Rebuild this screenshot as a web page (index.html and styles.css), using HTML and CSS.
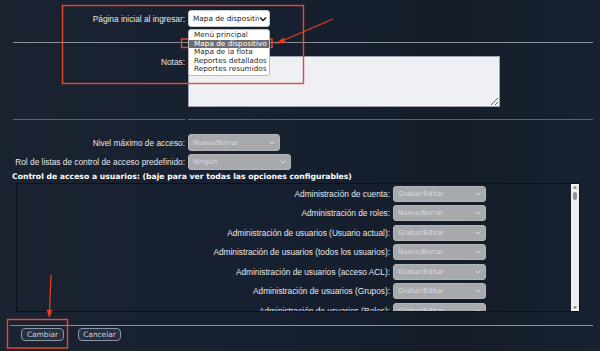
FILE: index.html
```html
<!DOCTYPE html>
<html>
<head>
	<meta name="viewport" content="width=device-width, initial-scale=1.0">
	<link rel="stylesheet" href="styles.css">
	<title>Configuración de usuario</title>
</head>
<body>
<form class="page" action="/update" method="post">
	<div class="row row-home">
		<label class="lbl">Página inicial al ingresar:</label>
		<div class="pick pick-home">
			<span class="pick-text">Mapa de dispositivo</span>
			<svg class="chev" width="8" height="6" viewBox="0 0 8 6"><path d="M1 1.5 L4 4.5 L7 1.5" fill="none" stroke="#111" stroke-width="1.4"/></svg>
			<ul class="menu">
				<li>Menú principal</li>
				<li class="hl">Mapa de dispositivo</li>
				<li>Mapa de la flota</li>
				<li>Reportes detallados</li>
				<li>Reportes resumidos</li>
			</ul>
		</div>
	</div>

	<div class="rule"></div>

	<div class="row row-notes">
		<label class="lbl">Notas:</label>
		<textarea class="notes"></textarea>
	</div>

	<div class="split-rule"><span class="cell-a"></span><span class="cell-b"></span></div>

	<div class="row row-level">
		<label class="lbl">Nivel máximo de acceso:</label>
		<div class="pick off w92"><span class="pick-text">Nuevo/Borrar</span>
			<svg class="chev" width="8" height="6" viewBox="0 0 8 6"><path d="M1.5 1.5 L4 4 L6.5 1.5" fill="none" stroke="#dcdee1" stroke-width="1"/></svg></div>
	</div>
	<div class="row row-role">
		<label class="lbl">Rol de listas de control de acceso predefinido:</label>
		<div class="pick off w103"><span class="pick-text">Ningún</span>
			<svg class="chev" width="8" height="6" viewBox="0 0 8 6"><path d="M1.5 1.5 L4 4 L6.5 1.5" fill="none" stroke="#dcdee1" stroke-width="1"/></svg></div>
	</div>

	<div class="section-title">Control de acceso a usuarios: (baje para ver todas las opciones configurables)</div>

	<div class="acl-box">
		<div class="acl-list">
			<div class="acl-row"><label class="acl-lbl">Administración de cuenta:</label><div class="pick off w93"><span class="pick-text">Grabar/Editar</span><svg class="chev" width="8" height="6" viewBox="0 0 8 6"><path d="M1.5 1.5 L4 4 L6.5 1.5" fill="none" stroke="#dcdee1" stroke-width="1"/></svg></div></div>
			<div class="acl-row"><label class="acl-lbl">Administración de roles:</label><div class="pick off w93"><span class="pick-text">Nuevo/Borrar</span><svg class="chev" width="8" height="6" viewBox="0 0 8 6"><path d="M1.5 1.5 L4 4 L6.5 1.5" fill="none" stroke="#dcdee1" stroke-width="1"/></svg></div></div>
			<div class="acl-row"><label class="acl-lbl">Administración de usuarios (Usuario actual):</label><div class="pick off w93"><span class="pick-text">Grabar/Editar</span><svg class="chev" width="8" height="6" viewBox="0 0 8 6"><path d="M1.5 1.5 L4 4 L6.5 1.5" fill="none" stroke="#dcdee1" stroke-width="1"/></svg></div></div>
			<div class="acl-row"><label class="acl-lbl">Administración de usuarios (todos los usuarios):</label><div class="pick off w93"><span class="pick-text">Nuevo/Borrar</span><svg class="chev" width="8" height="6" viewBox="0 0 8 6"><path d="M1.5 1.5 L4 4 L6.5 1.5" fill="none" stroke="#dcdee1" stroke-width="1"/></svg></div></div>
			<div class="acl-row"><label class="acl-lbl">Administración de usuarios (acceso ACL):</label><div class="pick off w93"><span class="pick-text">Grabar/Editar</span><svg class="chev" width="8" height="6" viewBox="0 0 8 6"><path d="M1.5 1.5 L4 4 L6.5 1.5" fill="none" stroke="#dcdee1" stroke-width="1"/></svg></div></div>
			<div class="acl-row"><label class="acl-lbl">Administración de usuarios (Grupos):</label><div class="pick off w93"><span class="pick-text">Grabar/Editar</span><svg class="chev" width="8" height="6" viewBox="0 0 8 6"><path d="M1.5 1.5 L4 4 L6.5 1.5" fill="none" stroke="#dcdee1" stroke-width="1"/></svg></div></div>
			<div class="acl-row"><label class="acl-lbl">Administración de usuarios (Roles):</label><div class="pick off w93"><span class="pick-text">Grabar/Editar</span><svg class="chev" width="8" height="6" viewBox="0 0 8 6"><path d="M1.5 1.5 L4 4 L6.5 1.5" fill="none" stroke="#dcdee1" stroke-width="1"/></svg></div></div>
		</div>
		<div class="scrollbar">
			<svg width="8" height="6" viewBox="0 0 8 6"><path d="M2 4.5 L4 2 L6 4.5 Z" fill="#777"/></svg>
			<div class="thumb"></div>
			<div class="track"></div>
			<svg width="8" height="6" viewBox="0 0 8 6"><path d="M2 1.5 L4 4 L6 1.5 Z" fill="#777"/></svg>
		</div>
	</div>

	<div class="rule rule-bottom"></div>

	<div class="actions">
		<button type="submit" class="btn">Cambiar</button>
		<button type="button" class="btn">Cancelar</button>
	</div>

	<!-- marks drawn on top of the capture -->
	<svg class="marks" width="600" height="351" viewBox="0 0 600 351">
		<rect x="62.5" y="5.5" width="241" height="78" fill="none" stroke="#ea4a2c" stroke-width="1.4"/>
		<rect x="181.5" y="39" width="90.5" height="8.5" fill="none" stroke="#ea4a2c" stroke-width="1.4"/>
		<line x1="333" y1="19" x2="283" y2="40.5" stroke="#ea3a1c" stroke-width="1.3"/>
		<path d="M275 44 L283.5 37.5 L285.5 42.5 Z" fill="#ea3a1c"/>
		<rect x="7.5" y="319.5" width="60" height="28.5" fill="none" stroke="#ea4a2c" stroke-width="1.4"/>
		<line x1="51" y1="275" x2="49.5" y2="311" stroke="#ea3a1c" stroke-width="1.3"/>
		<path d="M49.3 318 L46.5 310 L52.5 310 Z" fill="#ea3a1c"/>
	</svg>
</form>
</body>
</html>
```

FILE: styles.css
```css
	html, body {
		margin: 0;
		padding: 0;
	}

	body {
		width: 600px;
		height: 351px;
		overflow: hidden;
		background: linear-gradient(90deg, #1b2331 0%, #172030 45%, #151d2a 75%, #182130 100%);
		font-family: "Liberation Sans", Arial, sans-serif;
		color: #e4e6ea;
	}

	.page {
		position: relative;
		height: 351px;
		padding: 0 7px 0 13px;
		box-sizing: border-box;
	}

	.row {
		display: flex;
		align-items: center;
		gap: 3px;
	}

	.lbl {
		width: 172px;
		flex: none;
		text-align: right;
		font-size: 8.3px;
		color: #e6e8eb;
	}

	.row-home {
		padding-top: 10px;
		height: 17px;
	}

	.rule {
		margin-top: 15px;
		height: 1px;
		background: #8a9099;
	}

	.row-notes {
		margin-top: 13px;
		align-items: flex-start;
	}

	.row-notes .lbl {
		padding-top: 1px;
	}

	.notes {
		width: 312px;
		height: 51px;
		margin: 0;
		box-sizing: border-box;
		background: #eef0f4;
		border: 1px solid #9ea3ad;
		border-radius: 0;
	}

	.split-rule {
		display: flex;
		gap: 3px;
		margin-top: 12px;
		height: 1px;
	}
	.split-rule span {
		background: #5d636d;
	}
	.cell-a {
		width: 172px;
	}
	.cell-b {
		flex: 1;
	}

	.row-level {
		margin-top: 14px;
		height: 17px;
	}

	.row-role {
		margin-top: 3px;
		height: 16px;
	}

	/* fake selects */
	.pick {
		position: relative;
		display: flex;
		align-items: center;
		justify-content: space-between;
		box-sizing: border-box;
		border-radius: 3px;
		padding: 0 3px 0 4px;
		font-family: "DejaVu Sans", Verdana, sans-serif;
		font-size: 6.8px;
		white-space: nowrap;
	}

	.pick-text {
		overflow: hidden;
	}

	.chev {
		flex: none;
	}

	.pick-home {
		width: 82px;
		height: 17px;
		background: #fff;
		border: 1px solid #c8cbd0;
		color: #222;
		font-size: 7.3px;
		padding: 0 2px 0 4px;
	}

	.off {
		background: #a7a9ad;
		color: #dadcdf;
		height: 16px;
		border: 1px solid #b3b5b9;
	}
	.row-level .off {
		height: 17px;
	}

	.w92 { width: 92px; }
	.w93 { width: 93px; }
	.w103 { width: 103px; }

	.menu {
		position: absolute;
		top: 18px;
		left: -1px;
		width: 82px;
		margin: 0;
		padding: 1px 0 1px;
		list-style: none;
		background: #fff;
		border: 1px solid #b9bcc2;
		border-radius: 3px;
		box-sizing: border-box;
		font-size: 7.3px;
		color: #2a2a2a;
		z-index: 2;
	}

	.menu li {
		height: 8.6px;
		line-height: 8.6px;
		padding-left: 5px;
	}

	.menu .hl {
		background: #6d6d6d;
		color: #fff;
	}

	.section-title {
		margin-top: 1px;
		height: 12px;
		line-height: 12px;
		font-family: "DejaVu Sans", Verdana, sans-serif;
		font-weight: bold;
		font-size: 7.7px;
		color: #fff;
		margin-left: -1px;
		white-space: nowrap;
	}

	.acl-box {
		display: flex;
		margin-left: 3px;
		width: 564px;
		height: 129px;
		box-sizing: border-box;
		border: 1px solid #0c1017;
		overflow: hidden;
	}

	.acl-list {
		flex: 1;
	}

	.acl-row {
		display: flex;
		align-items: center;
		gap: 3px;
		height: 19.5px;
	}

	.acl-lbl {
		width: 373px;
		flex: none;
		text-align: right;
		font-size: 8.3px;
		color: #e6e8eb;
		white-space: nowrap;
	}

	.scrollbar {
		width: 8px;
		display: flex;
		flex-direction: column;
		align-items: center;
		background: #eeeef0;
	}
	.scrollbar svg {
		flex: none;
	}
	.thumb {
		width: 4px;
		height: 8px;
		margin-top: 2px;
		border-radius: 2px;
		background: #8f9196;
	}
	.track {
		flex: 1;
	}

	.rule-bottom {
		margin-top: 13px;
		margin-left: -3px;
	}

	.actions {
		display: flex;
		gap: 14px;
		margin-top: 2px;
		padding-left: 8px;
	}

	.btn {
		height: 13px;
		width: 43px;
		padding: 0;
		background: #253042;
		border: 1px solid #8d96a5;
		border-radius: 4px;
		color: #cfd3da;
		font-family: "DejaVu Sans", Verdana, sans-serif;
		font-size: 7.4px;
		line-height: 11px;
	}

	.marks {
		position: absolute;
		left: 0;
		top: 0;
		pointer-events: none;
	}
```
